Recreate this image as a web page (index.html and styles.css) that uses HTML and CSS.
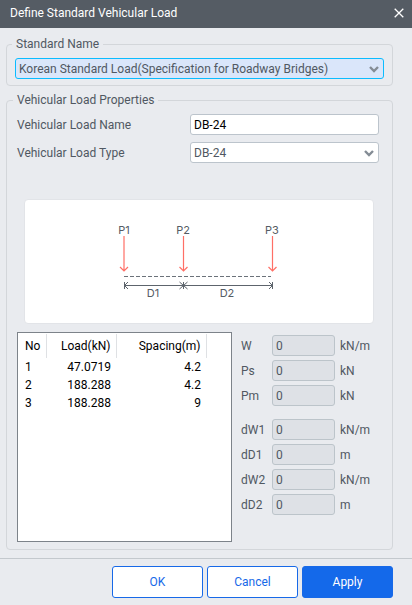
FILE: index.html
```html
<!DOCTYPE html>
<html lang="en">
<head>
    <meta charset="UTF-8">
    <meta name="viewport" content="width=device-width, initial-scale=1.0">
    <title>Define Standard Vehicular Load</title>
    <link rel="stylesheet" href="styles.css">
</head>
<body>
    <header class="titlebar">
        <h1>Define Standard Vehicular Load</h1>
        <button type="button" class="close" aria-label="Close">
            <svg width="10" height="10" viewBox="0 0 10 10"><path d="M0.7 0.7L9.3 9.3M9.3 0.7L0.7 9.3"/></svg>
        </button>
    </header>

    <form class="dialog">
        <main class="content">
            <fieldset class="group">
                <legend>Standard Name</legend>
                <div class="select active">
                    <select aria-label="Standard Name">
                        <option>Korean Standard Load(Specification for Roadway Bridges)</option>
                    </select>
                    <svg class="chevron" width="10" height="7" viewBox="0 0 10 7"><path d="M1 1L5 5L9 1"/></svg>
                </div>
            </fieldset>

            <fieldset class="group properties">
                <legend>Vehicular Load Properties</legend>
                <div class="row">
                    <label for="loadName">Vehicular Load Name</label>
                    <input type="text" id="loadName" value="DB-24">
                </div>
                <div class="row">
                    <label for="loadType">Vehicular Load Type</label>
                    <div class="select">
                        <select id="loadType">
                            <option>DB-24</option>
                        </select>
                        <svg class="chevron" width="10" height="7" viewBox="0 0 10 7"><path d="M1 1L5 5L9 1"/></svg>
                    </div>
                </div>

                <div class="diagram">
                    <svg width="170" height="80" viewBox="0 0 170 80" role="img" aria-label="Axle loads and spacing">
                        <g class="loads">
                            <path d="M10 14V49M6 45L10 49L14 45"/>
                            <path d="M69.5 14V49M65.5 45L69.5 49L73.5 45"/>
                            <path d="M158.5 14V49M154.5 45L158.5 49L162.5 45"/>
                        </g>
                        <path class="deck" d="M10 54.5H157"/>
                        <g class="dims">
                            <path d="M10 63.5H159"/>
                            <path d="M10.5 60V67M14 60L10.5 63.5L14 67"/>
                            <path d="M69.5 60V67M65.5 60L73.5 67M73.5 60L65.5 67"/>
                            <path d="M158.5 60V67M155 60L158.5 63.5L155 67"/>
                        </g>
                        <g class="names">
                            <text x="10" y="12">P1</text>
                            <text x="69" y="12">P2</text>
                            <text x="158" y="12">P3</text>
                            <text x="39" y="75">D1</text>
                            <text x="113" y="75">D2</text>
                        </g>
                    </svg>
                </div>

                <div class="details">
                    <div class="list">
                        <table>
                            <thead>
                                <tr><th class="no">No</th><th class="load">Load(kN)</th><th class="spacing">Spacing(m)</th><th></th></tr>
                            </thead>
                            <tbody>
                                <tr><td>1</td><td>47.0719</td><td>4.2</td><td></td></tr>
                                <tr><td>2</td><td>188.288</td><td>4.2</td><td></td></tr>
                                <tr><td>3</td><td>188.288</td><td>9</td><td></td></tr>
                            </tbody>
                        </table>
                    </div>

                    <div class="params">
                        <div class="param-group">
                            <div class="param"><label for="w">W</label><input type="text" id="w" value="0" disabled><span>kN/m</span></div>
                            <div class="param"><label for="ps">Ps</label><input type="text" id="ps" value="0" disabled><span>kN</span></div>
                            <div class="param"><label for="pm">Pm</label><input type="text" id="pm" value="0" disabled><span>kN</span></div>
                        </div>
                        <div class="param-group">
                            <div class="param"><label for="dw1">dW1</label><input type="text" id="dw1" value="0" disabled><span>kN/m</span></div>
                            <div class="param"><label for="dd1">dD1</label><input type="text" id="dd1" value="0" disabled><span>m</span></div>
                            <div class="param"><label for="dw2">dW2</label><input type="text" id="dw2" value="0" disabled><span>kN/m</span></div>
                            <div class="param"><label for="dd2">dD2</label><input type="text" id="dd2" value="0" disabled><span>m</span></div>
                        </div>
                    </div>
                </div>
            </fieldset>
        </main>

        <footer class="actions">
            <button type="button">OK</button>
            <button type="button">Cancel</button>
            <button type="button" class="primary">Apply</button>
        </footer>
    </form>
</body>
</html>
```

FILE: styles.css
```css
* {
    box-sizing: border-box;
}
body {
    margin: 0;
    background-color: #e9ebef;
    color: #505862;
    font-family: Roboto, "Liberation Sans", sans-serif;
    font-size: 12px;
    line-height: 16px;
}
input, select, button {
    font: inherit;
    color: inherit;
}

/* title bar */
.titlebar {
    display: flex;
    align-items: center;
    justify-content: space-between;
    height: 28px;
    padding: 0 8px 2px 10px;
    background-color: #555c64;
    color: #fff;
}
.titlebar h1 {
    margin: 0;
    font-size: 12px;
    font-weight: normal;
}
.close {
    display: flex;
    padding: 0;
    border: 0;
    background: none;
}
.close path {
    stroke: #fff;
    stroke-width: 1.3;
}

/* groups */
.content {
    display: flex;
    flex-direction: column;
    gap: 6px;
    padding: 8px 19px 8px 6px;
}
.group {
    min-width: 0;
    margin: 0;
    padding: 6px 8px;
    border: 1px solid #d3d6da;
    border-radius: 4px;
}
.group legend {
    margin-left: -3px;
    padding: 0 4px;
}
.properties {
    padding: 6px 0 7px 10px;
}
.properties legend {
    margin-left: -4px;
}
.row {
    display: grid;
    grid-template-columns: 173px 1fr;
    align-items: center;
    margin: 0 13px 7px 0;
}

/* fields */
input, select {
    display: block;
    width: 100%;
    height: 21px;
    padding: 0 3px;
    border: 1px solid #bcc4cc;
    border-radius: 3px;
    background-color: #fff;
}
#loadName {
    color: #000;
}
.select {
    position: relative;
}
.select select {
    appearance: none;
}
.chevron {
    position: absolute;
    top: 8px;
    right: 5px;
    pointer-events: none;
}
.chevron path {
    fill: none;
    stroke: #848c95;
    stroke-width: 2.4;
}
.active select {
    border-color: #0bbcff;
    background-color: #dae6fa;
}
input:disabled {
    border-color: #bcc4ca;
    background-color: #dee1e6;
}

/* load diagram */
.diagram {
    display: flex;
    justify-content: center;
    margin: 36px 18px 8px 7px;
    padding: 22px 0 21px;
    border: 1px solid #e2e4e8;
    border-radius: 4px;
    background-color: #fff;
}
.diagram path {
    fill: none;
}
.loads path {
    stroke: #ff6f66;
    stroke-width: 1.2;
}
.deck {
    stroke: #6b727a;
    stroke-dasharray: 4 2;
}
.dims path {
    stroke: #5d646c;
}
.names text {
    fill: #555c64;
    font-family: Inter, sans-serif;
    font-size: 11px;
    text-anchor: middle;
}

/* load list */
.details {
    display: flex;
    gap: 9px;
}
.list {
    flex: 0 0 215px;
    border: 1px solid #7d838a;
    background-color: #fff;
    color: #000;
}
table {
    width: 100%;
    margin-top: 1px;
    border-collapse: collapse;
    table-layout: fixed;
}
th {
    height: 24px;
    padding: 0 5px;
    border-right: 1px solid #dfe1e4;
    font-weight: normal;
    text-align: right;
}
th:first-child, td:first-child {
    padding-left: 7px;
    text-align: left;
}
th:last-child {
    border-right: 0;
}
td {
    height: 18px;
    padding: 0 5px;
    text-align: right;
}
.no {
    width: 28px;
}
.load {
    width: 70px;
}
.spacing {
    width: 90px;
}

/* parameters */
.params {
    display: flex;
    flex: 1;
    flex-direction: column;
    gap: 13px;
    padding: 3px 0 27px;
}
.param-group {
    display: flex;
    flex-direction: column;
    gap: 4px;
}
.param {
    display: grid;
    grid-template-columns: 31px 63px 1fr;
    align-items: center;
}
.param span {
    padding-left: 5px;
}

/* buttons */
.actions {
    display: flex;
    justify-content: flex-end;
    gap: 4px;
    padding: 7px 19px;
    border-top: 1px solid #c3c8cd;
}
.actions button {
    width: 91px;
    height: 32px;
    border: 1px solid #1769e8;
    border-radius: 3px;
    background-color: #fff;
    color: #1769e8;
}
.actions .primary {
    background-color: #1469ea;
    color: #fff;
}
```
